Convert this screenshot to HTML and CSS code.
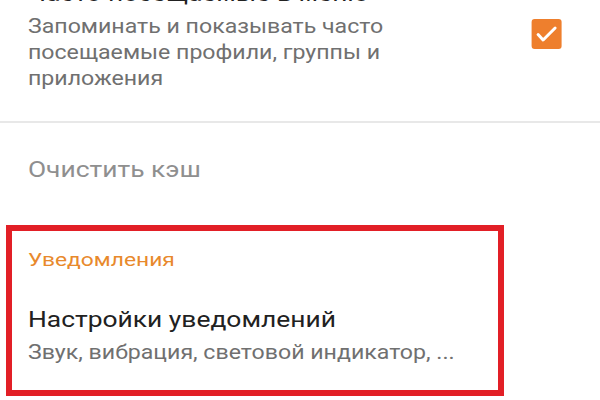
FILE: index.html
```html
<!DOCTYPE html>
<html lang="ru">
<head>
<meta charset="utf-8">
<link rel="stylesheet" href="styles.css">
</head>
<body>
<div class="screen">
  <div class="pref pref-check">
    <div class="pref-text">
      <div class="pref-title">Часто посещаемые в меню</div>
      <div class="pref-summary">Запоминать и показывать часто посещаемые профили, группы и приложения</div>
    </div>
    <div class="checkbox">
      <svg viewBox="0 0 30 30" width="25" height="30" preserveAspectRatio="none"><path d="M6.5 15.5 L11.5 21 L23.5 9" fill="none" stroke="#fff" stroke-width="3" stroke-linecap="round" stroke-linejoin="round"/></svg>
    </div>
  </div>
  <div class="divider"></div>
  <div class="pref pref-disabled">
    <div class="pref-title">Очистить кэш</div>
  </div>
  <div class="highlight">
    <div class="category">Уведомления</div>
    <div class="pref pref-notif">
      <div class="pref-title">Настройки уведомлений</div>
      <div class="pref-summary">Звук, вибрация, световой индикатор, ...</div>
    </div>
  </div>
</div>
</body>
</html>
```
FILE: styles.css
```css
html, body {
  margin: 0;
  padding: 0;
  background: #fff;
  overflow: hidden;
}
/* the reference is stretched horizontally by about 1.2 */
.screen {
  width: 500px;
  height: 400px;
  font-family: Roboto, "Noto Sans", sans-serif;
  overflow: hidden;
  transform: scaleX(1.2);
  transform-origin: 0 0;
}
.pref-title {
  font-size: 22px;
  line-height: 26px;
  color: #212121;
  white-space: nowrap;
}
.pref-summary {
  font-size: 19.3px;
  line-height: 26px;
  color: #707070;
}
.pref-check {
  display: flex;
  align-items: flex-start;
  margin-top: -19px;
  padding: 0 31.7px 29px 23.3px;
}
.pref-check .pref-text {
  flex: 1;
}
.pref-check .pref-summary {
  margin-top: 7px;
  width: 310px;
}
.checkbox {
  width: 25px;
  height: 30px;
  margin-top: 38px;
  background: #ee7f2d;
  border-radius: 2.5px / 3px;
  flex: none;
}
.checkbox svg {
  display: block;
}
.divider {
  height: 2px;
  background: #e8e8e8;
}
.pref-disabled {
  padding: 33.5px 23.3px 0;
}
.pref-disabled .pref-title {
  color: #8f8f8f;
}
.highlight {
  margin: 42.5px 0 0 5px;
  width: 391.7px;
  border-style: solid;
  border-color: #e21f26;
  border-width: 6px 5px;
  padding: 16.5px 0 24px 13.3px;
}
.category {
  font-size: 19px;
  line-height: 24px;
  color: #e8892c;
}
.pref-notif {
  padding-top: 35px;
}
.pref-notif .pref-summary {
  margin-top: 7.5px;
}
```
